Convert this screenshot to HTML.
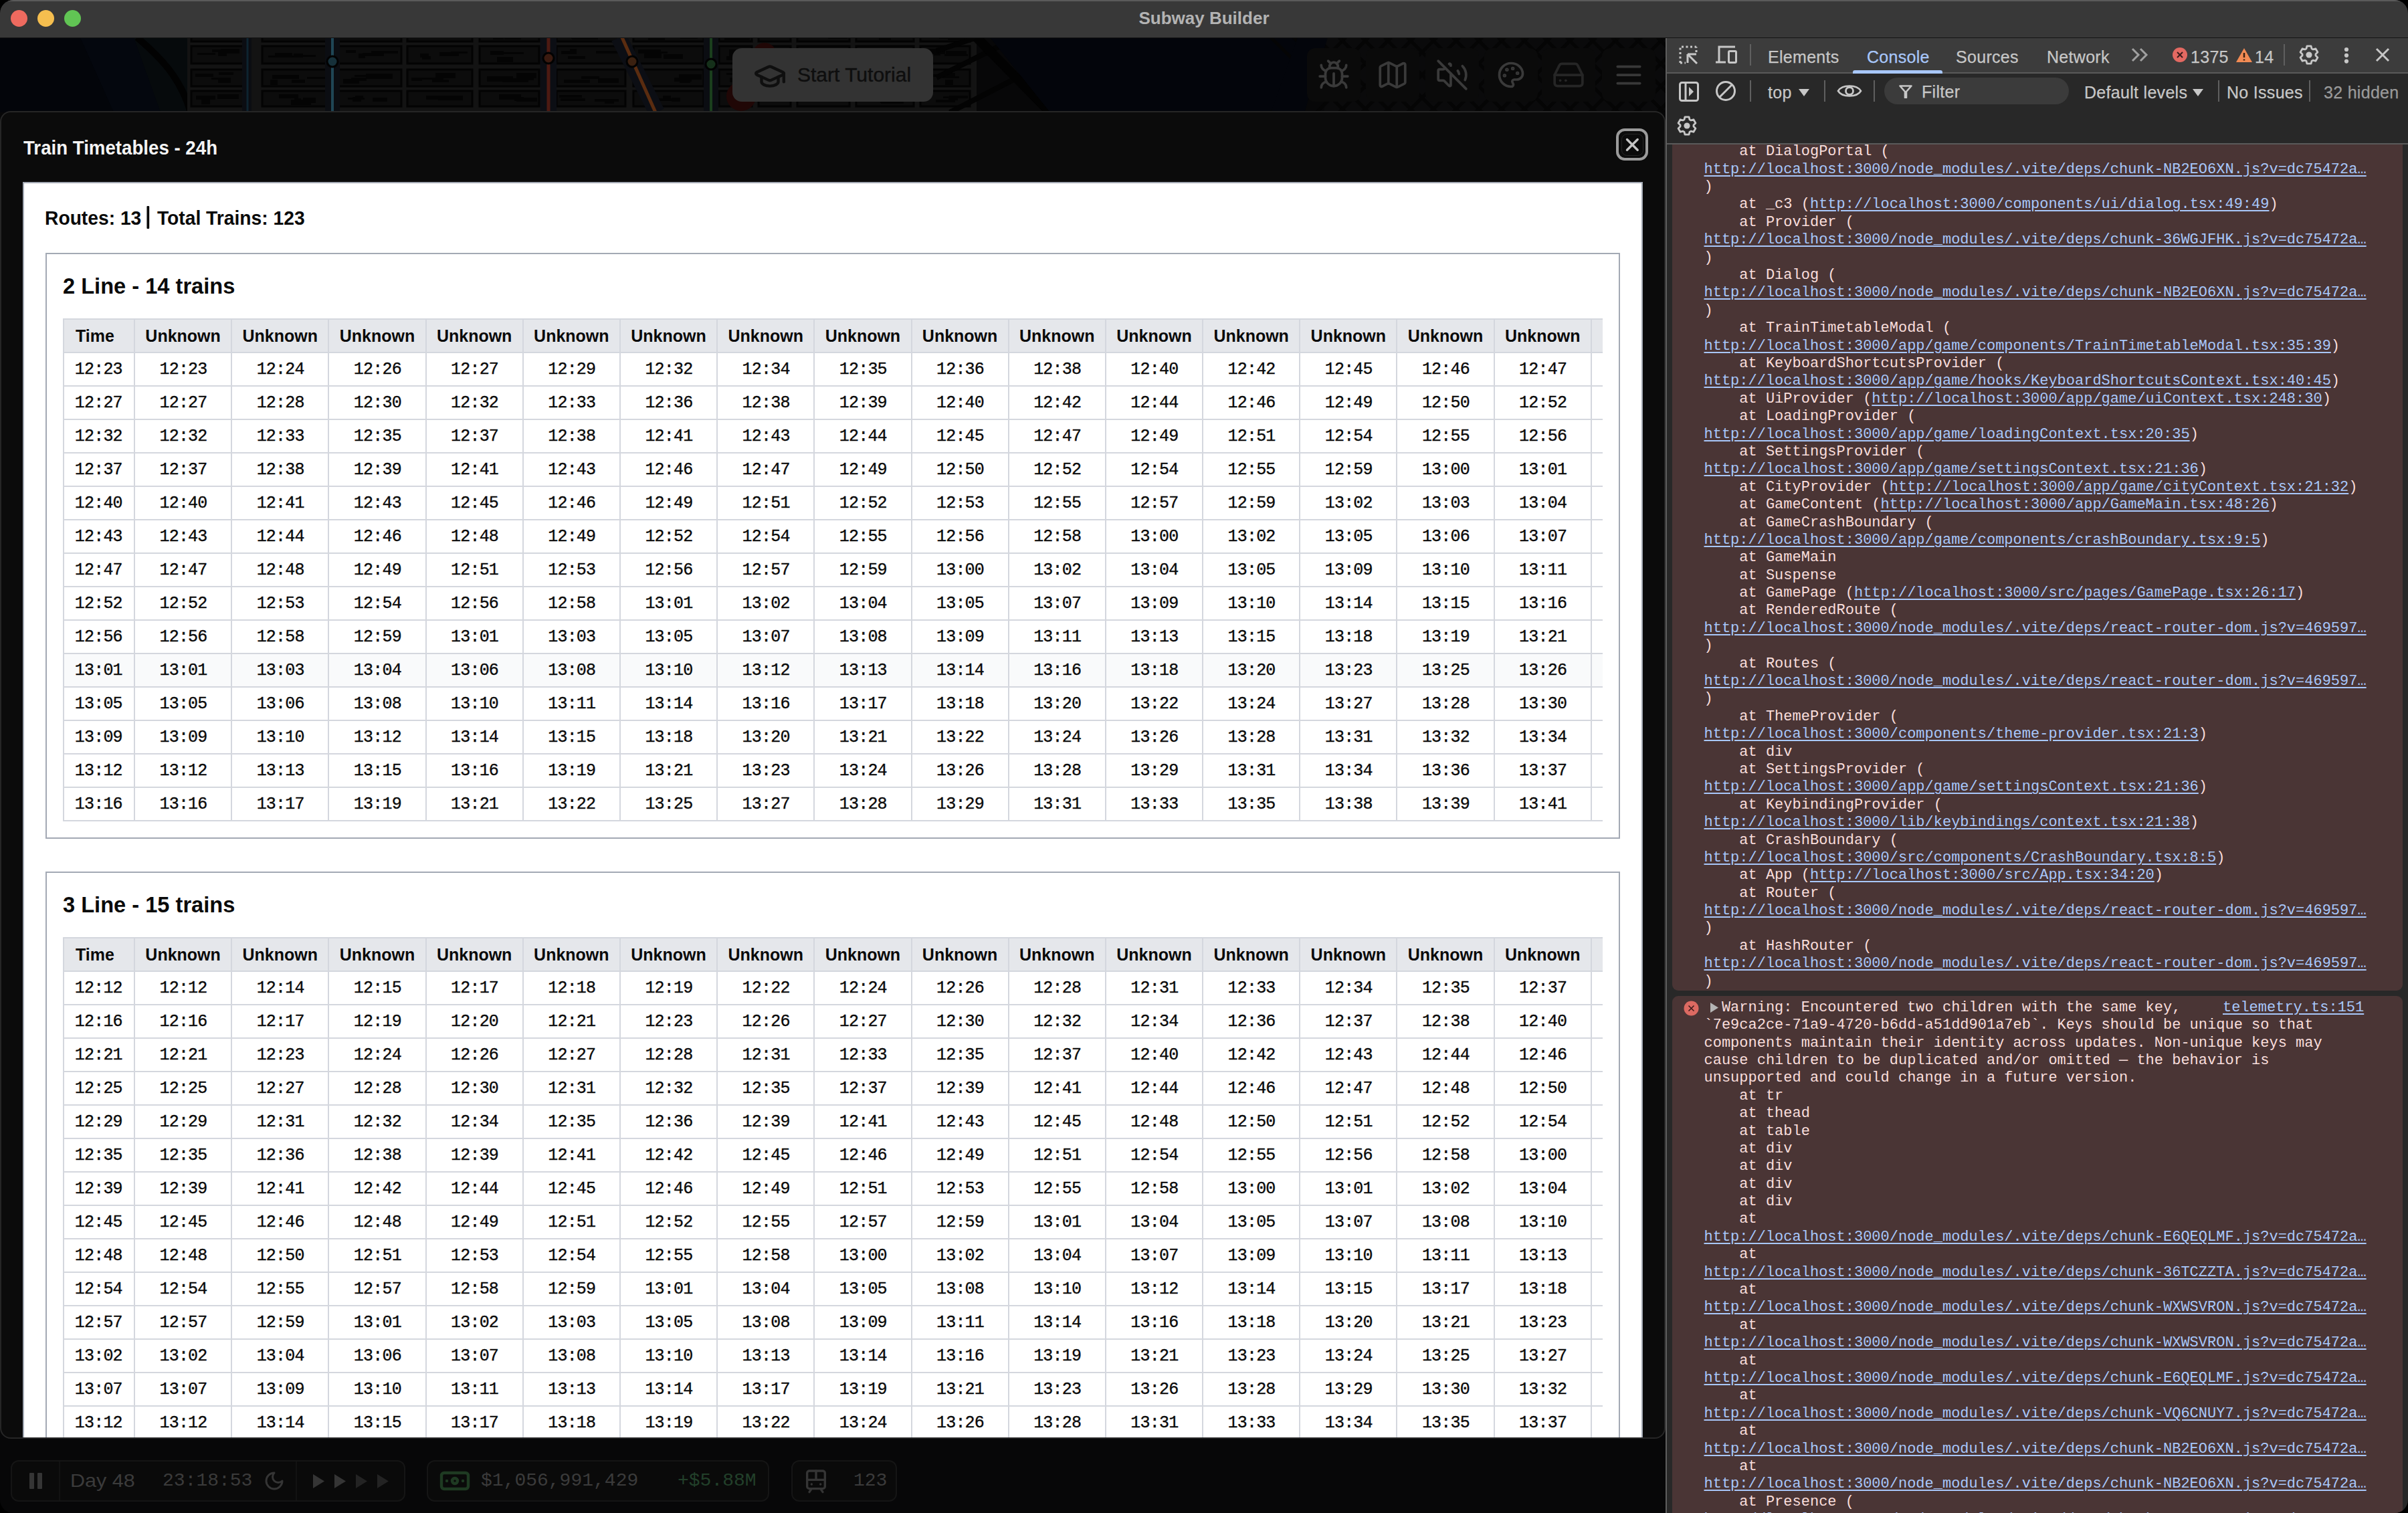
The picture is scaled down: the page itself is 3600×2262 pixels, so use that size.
<!DOCTYPE html><html><head><meta charset="utf-8"><title>Subway Builder</title><style>
*{box-sizing:border-box;margin:0;padding:0}
html,body{width:3600px;height:2262px;overflow:hidden;background:#000}
body{position:relative;font-family:'Liberation Sans', sans-serif}
.abs{position:absolute}
#win{position:absolute;left:0;top:0;width:3600px;height:2262px;border-radius:20px;overflow:hidden;background:#060709}
#tb{position:absolute;left:0;top:0;width:3600px;height:57px;background:#383838;border-top:2px solid #5a5a5a;border-bottom:1px solid #141414;z-index:5}
.tl-dot{position:absolute;top:13px;width:25px;height:25px;border-radius:50%}
#title{position:absolute;left:0;top:0;width:3600px;text-align:center;font:bold 26px/56px 'Liberation Sans', sans-serif;color:#b3b3b3}
#app{position:absolute;left:0;top:56px;width:2490px;height:2206px;overflow:hidden;background:#050608}
#modal{position:absolute;left:0;top:110px;width:2490px;height:1985px;background:#0b0b0b;border:2px solid #262626;border-radius:16px;overflow:hidden}
#mtitle{position:absolute;left:33px;top:38px;font:bold 30px/30px 'Liberation Sans', sans-serif;color:#f4f4f4;white-space:nowrap;transform:scaleX(0.922);transform-origin:0 0}
#close{position:absolute;left:2414px;top:24px;width:48px;height:48px;border:4px solid #9b9b9b;border-radius:13px}
#panel{position:absolute;left:32px;top:104px;width:2422px;height:2000px;background:#fff;border:2px solid #a3a9b4}
#routes{position:absolute;left:31px;top:36.5px;font:bold 30px/30px 'Liberation Sans', sans-serif;color:#0a0a0a;white-space:nowrap;transform:scaleX(0.941);transform-origin:0 0}
.sec{position:absolute;left:32px;width:2354px;height:876px;border:2px solid #a3a9b4;background:#fff}
.sect{position:absolute;left:24px;top:29.5px;font:bold 34px/34px 'Liberation Sans', sans-serif;color:#0a0a0a;white-space:nowrap;transform:scaleX(0.959);transform-origin:0 0}
.twrap{position:absolute;left:24px;top:96px;width:2302px;height:900px;overflow:hidden}
table.tt{border-collapse:collapse;table-layout:fixed;width:2431px}
.tt th,.tt td{border:2px solid #d4d7de;height:50px;text-align:center;padding:0;white-space:nowrap;overflow:hidden}
.tt th{background:#e5e7eb;font:bold 25px/1 'Liberation Sans', sans-serif;color:#0a0a0a}
.tt td{font:25px/1 'Liberation Mono', monospace;color:#0a0a0a;-webkit-text-stroke:0.35px #0a0a0a;letter-spacing:-0.8px;text-indent:0.8px}
.tt .tl{text-align:left;padding-left:17px}
.tt td.tl{padding-left:15px}
.tt tr.hv td{background:#f9fafb}
#dt{position:absolute;left:2490px;top:56px;width:1110px;height:2206px;background:#282828;border-left:2px solid #5e5e5e;overflow:hidden}
#dtb1{position:absolute;left:0;top:0;width:1108px;height:54px;background:#3c3c3c;border-bottom:2px solid #5a5a5a}
#dtb2{position:absolute;left:0;top:54px;width:1108px;height:106px;background:#282828;border-bottom:2px solid #5a5a5a}
.dtx{position:absolute;font:25px/24px 'Liberation Sans', sans-serif;color:#c7c7c7;white-space:nowrap;letter-spacing:0.3px;-webkit-text-stroke:0.25px currentColor}
.sep{position:absolute;width:2px;background:#5f5f5f}
#cons{position:absolute;left:0;top:160px;width:1108px;height:2046px;overflow:hidden}
.msg{position:absolute;left:8px;width:1092px;background:#4a3535}
.ln{font:22px/26.4px 'Liberation Mono', monospace;color:#f9dedc;white-space:pre;height:26.4px}
.lk{color:#a8c7fa;text-decoration:underline;text-underline-offset:3px}
#hud{position:absolute;left:0;top:2094px;width:2490px;height:112px}
.hbox{position:absolute;top:33px;height:62px;border:2px solid #151515;border-radius:12px;background:#0a0a0a}
.htx{position:absolute;font:28px/28px 'Liberation Sans', sans-serif;color:#3b3b3b;white-space:nowrap}
.hmono{position:absolute;font:28px/28px 'Liberation Mono', monospace;color:#3b3b3b;white-space:nowrap}
.ibox{position:absolute;top:16px;width:80px;height:80px;border-radius:12px;background:#0a0a0a}
.ibox svg{position:absolute;left:15px;top:15px}
</style></head><body><div id="win"><div id="tb"><div class="tl-dot" style="left:16px;background:#ee6a5f"></div><div class="tl-dot" style="left:56px;background:#f5be4f"></div><div class="tl-dot" style="left:96px;background:#61c454"></div><div id="title" style="top:-3px">Subway Builder</div></div><div id="app"><svg class="abs" style="left:0;top:0" width="2490" height="2206" viewBox="0 0 2490 2206"><rect width="2490" height="2206" fill="#070708"/><rect x="0" y="0" width="300" height="112" fill="#03050a"/><path d="M120 0 H300 V112 H170Z" fill="#04070e"/><path d="M200 0 H280 L290 112 H240Z" fill="#060a0c"/><path d="M205 0 C240 30 270 60 285 112" stroke="#020202" stroke-width="10" fill="none"/><rect x="280" y="0" width="1180" height="112" fill="#131313"/><rect x="286" y="-10" width="82" height="16" fill="#0c0c0c" stroke="#030303" stroke-width="3"/><rect x="310" y="-6" width="40" height="6" fill="#040404"/><rect x="331" y="-6" width="11" height="7" fill="#040404"/><rect x="296" y="-4" width="21" height="3" fill="#040404"/><rect x="322" y="-6" width="16" height="3" fill="#040404"/><rect x="286" y="13" width="82" height="26" fill="#0c0c0c" stroke="#030303" stroke-width="3"/><rect x="317" y="18" width="23" height="4" fill="#040404"/><rect x="295" y="23" width="27" height="3" fill="#040404"/><rect x="326" y="20" width="13" height="8" fill="#040404"/><rect x="330" y="17" width="28" height="7" fill="#040404"/><rect x="286" y="48" width="82" height="25" fill="#0c0c0c" stroke="#030303" stroke-width="3"/><rect x="327" y="52" width="22" height="4" fill="#040404"/><rect x="292" y="54" width="27" height="5" fill="#040404"/><rect x="316" y="60" width="14" height="3" fill="#040404"/><rect x="326" y="60" width="19" height="8" fill="#040404"/><rect x="286" y="80" width="82" height="23" fill="#0c0c0c" stroke="#030303" stroke-width="3"/><rect x="301" y="93" width="13" height="7" fill="#040404"/><rect x="330" y="89" width="16" height="3" fill="#040404"/><rect x="325" y="85" width="32" height="7" fill="#040404"/><rect x="293" y="87" width="29" height="6" fill="#040404"/><rect x="392" y="-10" width="99" height="16" fill="#0c0c0c" stroke="#030303" stroke-width="3"/><rect x="450" y="-5" width="34" height="6" fill="#040404"/><rect x="454" y="-5" width="21" height="4" fill="#040404"/><rect x="419" y="-6" width="32" height="3" fill="#040404"/><rect x="434" y="-5" width="26" height="5" fill="#040404"/><rect x="392" y="13" width="99" height="26" fill="#0c0c0c" stroke="#030303" stroke-width="3"/><rect x="453" y="26" width="19" height="3" fill="#040404"/><rect x="411" y="23" width="26" height="4" fill="#040404"/><rect x="439" y="24" width="14" height="6" fill="#040404"/><rect x="401" y="27" width="40" height="3" fill="#040404"/><rect x="392" y="48" width="99" height="25" fill="#0c0c0c" stroke="#030303" stroke-width="3"/><rect x="436" y="63" width="20" height="5" fill="#040404"/><rect x="459" y="59" width="28" height="3" fill="#040404"/><rect x="407" y="56" width="40" height="6" fill="#040404"/><rect x="404" y="63" width="11" height="8" fill="#040404"/><rect x="392" y="80" width="99" height="23" fill="#0c0c0c" stroke="#030303" stroke-width="3"/><rect x="435" y="93" width="30" height="8" fill="#040404"/><rect x="453" y="90" width="19" height="8" fill="#040404"/><rect x="440" y="91" width="10" height="5" fill="#040404"/><rect x="417" y="85" width="29" height="6" fill="#040404"/><rect x="503" y="-10" width="97" height="16" fill="#0c0c0c" stroke="#030303" stroke-width="3"/><rect x="514" y="-5" width="16" height="4" fill="#040404"/><rect x="538" y="-5" width="22" height="6" fill="#040404"/><rect x="517" y="-5" width="15" height="6" fill="#040404"/><rect x="542" y="-6" width="38" height="6" fill="#040404"/><rect x="503" y="13" width="97" height="26" fill="#0c0c0c" stroke="#030303" stroke-width="3"/><rect x="542" y="23" width="32" height="5" fill="#040404"/><rect x="555" y="20" width="40" height="4" fill="#040404"/><rect x="517" y="19" width="15" height="4" fill="#040404"/><rect x="536" y="24" width="10" height="7" fill="#040404"/><rect x="503" y="48" width="97" height="25" fill="#0c0c0c" stroke="#030303" stroke-width="3"/><rect x="530" y="56" width="18" height="3" fill="#040404"/><rect x="525" y="60" width="23" height="5" fill="#040404"/><rect x="547" y="54" width="40" height="8" fill="#040404"/><rect x="513" y="62" width="24" height="7" fill="#040404"/><rect x="503" y="80" width="97" height="23" fill="#0c0c0c" stroke="#030303" stroke-width="3"/><rect x="557" y="90" width="22" height="6" fill="#040404"/><rect x="520" y="90" width="25" height="3" fill="#040404"/><rect x="531" y="87" width="12" height="6" fill="#040404"/><rect x="527" y="89" width="13" height="7" fill="#040404"/><rect x="609" y="-10" width="97" height="16" fill="#0c0c0c" stroke="#030303" stroke-width="3"/><rect x="619" y="-6" width="13" height="7" fill="#040404"/><rect x="632" y="-6" width="27" height="5" fill="#040404"/><rect x="616" y="-6" width="12" height="7" fill="#040404"/><rect x="661" y="-4" width="14" height="5" fill="#040404"/><rect x="609" y="13" width="97" height="26" fill="#0c0c0c" stroke="#030303" stroke-width="3"/><rect x="657" y="22" width="29" height="6" fill="#040404"/><rect x="628" y="24" width="13" height="6" fill="#040404"/><rect x="674" y="21" width="25" height="3" fill="#040404"/><rect x="631" y="28" width="13" height="5" fill="#040404"/><rect x="609" y="48" width="97" height="25" fill="#0c0c0c" stroke="#030303" stroke-width="3"/><rect x="646" y="63" width="25" height="4" fill="#040404"/><rect x="615" y="60" width="16" height="5" fill="#040404"/><rect x="631" y="60" width="32" height="3" fill="#040404"/><rect x="651" y="53" width="30" height="8" fill="#040404"/><rect x="609" y="80" width="97" height="23" fill="#0c0c0c" stroke="#030303" stroke-width="3"/><rect x="646" y="89" width="26" height="4" fill="#040404"/><rect x="658" y="87" width="34" height="7" fill="#040404"/><rect x="655" y="87" width="30" height="7" fill="#040404"/><rect x="637" y="87" width="35" height="6" fill="#040404"/><rect x="717" y="-10" width="89" height="16" fill="#0c0c0c" stroke="#030303" stroke-width="3"/><rect x="768" y="-6" width="35" height="4" fill="#040404"/><rect x="754" y="-5" width="25" height="8" fill="#040404"/><rect x="722" y="-5" width="10" height="6" fill="#040404"/><rect x="737" y="-4" width="16" height="7" fill="#040404"/><rect x="717" y="13" width="89" height="26" fill="#0c0c0c" stroke="#030303" stroke-width="3"/><rect x="743" y="29" width="24" height="8" fill="#040404"/><rect x="743" y="22" width="40" height="3" fill="#040404"/><rect x="735" y="20" width="13" height="6" fill="#040404"/><rect x="733" y="20" width="20" height="6" fill="#040404"/><rect x="717" y="48" width="89" height="25" fill="#0c0c0c" stroke="#030303" stroke-width="3"/><rect x="760" y="61" width="38" height="3" fill="#040404"/><rect x="751" y="62" width="39" height="5" fill="#040404"/><rect x="772" y="53" width="30" height="8" fill="#040404"/><rect x="728" y="58" width="39" height="8" fill="#040404"/><rect x="717" y="80" width="89" height="23" fill="#0c0c0c" stroke="#030303" stroke-width="3"/><rect x="769" y="91" width="16" height="4" fill="#040404"/><rect x="748" y="89" width="35" height="3" fill="#040404"/><rect x="772" y="90" width="31" height="6" fill="#040404"/><rect x="746" y="85" width="33" height="8" fill="#040404"/><rect x="832" y="-10" width="103" height="16" fill="#0c0c0c" stroke="#030303" stroke-width="3"/><rect x="856" y="-6" width="15" height="3" fill="#040404"/><rect x="855" y="-5" width="28" height="8" fill="#040404"/><rect x="854" y="-4" width="29" height="6" fill="#040404"/><rect x="880" y="-4" width="14" height="7" fill="#040404"/><rect x="832" y="13" width="103" height="26" fill="#0c0c0c" stroke="#030303" stroke-width="3"/><rect x="852" y="17" width="10" height="8" fill="#040404"/><rect x="849" y="28" width="26" height="4" fill="#040404"/><rect x="891" y="20" width="37" height="4" fill="#040404"/><rect x="839" y="20" width="18" height="5" fill="#040404"/><rect x="832" y="48" width="103" height="25" fill="#0c0c0c" stroke="#030303" stroke-width="3"/><rect x="900" y="61" width="17" height="5" fill="#040404"/><rect x="869" y="58" width="27" height="4" fill="#040404"/><rect x="843" y="63" width="39" height="5" fill="#040404"/><rect x="894" y="61" width="31" height="7" fill="#040404"/><rect x="832" y="80" width="103" height="23" fill="#0c0c0c" stroke="#030303" stroke-width="3"/><rect x="889" y="92" width="36" height="4" fill="#040404"/><rect x="904" y="92" width="14" height="7" fill="#040404"/><rect x="838" y="91" width="37" height="4" fill="#040404"/><rect x="836" y="86" width="34" height="4" fill="#040404"/><rect x="947" y="-10" width="105" height="16" fill="#0c0c0c" stroke="#030303" stroke-width="3"/><rect x="969" y="-4" width="25" height="8" fill="#040404"/><rect x="966" y="-6" width="27" height="5" fill="#040404"/><rect x="1017" y="-4" width="26" height="6" fill="#040404"/><rect x="964" y="-4" width="38" height="3" fill="#040404"/><rect x="947" y="13" width="105" height="26" fill="#0c0c0c" stroke="#030303" stroke-width="3"/><rect x="982" y="21" width="16" height="3" fill="#040404"/><rect x="963" y="24" width="26" height="7" fill="#040404"/><rect x="954" y="18" width="34" height="6" fill="#040404"/><rect x="992" y="25" width="29" height="7" fill="#040404"/><rect x="947" y="48" width="105" height="25" fill="#0c0c0c" stroke="#030303" stroke-width="3"/><rect x="1016" y="63" width="16" height="5" fill="#040404"/><rect x="1008" y="60" width="26" height="6" fill="#040404"/><rect x="1015" y="55" width="34" height="8" fill="#040404"/><rect x="1017" y="56" width="32" height="7" fill="#040404"/><rect x="947" y="80" width="105" height="23" fill="#0c0c0c" stroke="#030303" stroke-width="3"/><rect x="976" y="91" width="36" height="4" fill="#040404"/><rect x="1004" y="90" width="13" height="6" fill="#040404"/><rect x="991" y="87" width="12" height="6" fill="#040404"/><rect x="960" y="88" width="16" height="3" fill="#040404"/><rect x="1075" y="-10" width="49" height="16" fill="#0c0c0c" stroke="#030303" stroke-width="3"/><rect x="1083" y="-4" width="38" height="8" fill="#040404"/><rect x="1090" y="-5" width="14" height="4" fill="#040404"/><rect x="1093" y="-4" width="17" height="3" fill="#040404"/><rect x="1091" y="-5" width="30" height="4" fill="#040404"/><rect x="1075" y="13" width="49" height="26" fill="#0c0c0c" stroke="#030303" stroke-width="3"/><rect x="1086" y="28" width="15" height="6" fill="#040404"/><rect x="1091" y="23" width="20" height="4" fill="#040404"/><rect x="1090" y="18" width="20" height="8" fill="#040404"/><rect x="1090" y="22" width="10" height="7" fill="#040404"/><rect x="1075" y="48" width="49" height="25" fill="#0c0c0c" stroke="#030303" stroke-width="3"/><rect x="1093" y="63" width="24" height="3" fill="#040404"/><rect x="1091" y="60" width="20" height="7" fill="#040404"/><rect x="1088" y="53" width="26" height="3" fill="#040404"/><rect x="1086" y="53" width="35" height="3" fill="#040404"/><rect x="1075" y="80" width="49" height="23" fill="#0c0c0c" stroke="#030303" stroke-width="3"/><rect x="1087" y="84" width="18" height="4" fill="#040404"/><rect x="1087" y="86" width="34" height="6" fill="#040404"/><rect x="1087" y="86" width="22" height="7" fill="#040404"/><rect x="1094" y="89" width="27" height="3" fill="#040404"/><rect x="1134" y="-10" width="48" height="16" fill="#0c0c0c" stroke="#030303" stroke-width="3"/><rect x="1142" y="-4" width="11" height="4" fill="#040404"/><rect x="1144" y="-6" width="35" height="5" fill="#040404"/><rect x="1138" y="-6" width="30" height="5" fill="#040404"/><rect x="1139" y="-6" width="29" height="3" fill="#040404"/><rect x="1134" y="13" width="48" height="26" fill="#0c0c0c" stroke="#030303" stroke-width="3"/><rect x="1142" y="18" width="37" height="6" fill="#040404"/><rect x="1138" y="25" width="20" height="6" fill="#040404"/><rect x="1152" y="21" width="27" height="7" fill="#040404"/><rect x="1140" y="25" width="11" height="8" fill="#040404"/><rect x="1134" y="48" width="48" height="25" fill="#0c0c0c" stroke="#030303" stroke-width="3"/><rect x="1141" y="53" width="38" height="4" fill="#040404"/><rect x="1142" y="54" width="11" height="4" fill="#040404"/><rect x="1152" y="62" width="19" height="5" fill="#040404"/><rect x="1146" y="55" width="33" height="5" fill="#040404"/><rect x="1134" y="80" width="48" height="23" fill="#0c0c0c" stroke="#030303" stroke-width="3"/><rect x="1145" y="86" width="26" height="5" fill="#040404"/><rect x="1143" y="84" width="35" height="5" fill="#040404"/><rect x="1138" y="84" width="10" height="8" fill="#040404"/><rect x="1146" y="87" width="27" height="7" fill="#040404"/><rect x="1192" y="-10" width="78" height="16" fill="#0c0c0c" stroke="#030303" stroke-width="3"/><rect x="1226" y="-5" width="17" height="3" fill="#040404"/><rect x="1238" y="-4" width="29" height="6" fill="#040404"/><rect x="1238" y="-4" width="25" height="6" fill="#040404"/><rect x="1228" y="-4" width="19" height="4" fill="#040404"/><rect x="1192" y="13" width="78" height="26" fill="#0c0c0c" stroke="#030303" stroke-width="3"/><rect x="1210" y="20" width="20" height="8" fill="#040404"/><rect x="1236" y="23" width="14" height="5" fill="#040404"/><rect x="1199" y="19" width="36" height="3" fill="#040404"/><rect x="1200" y="28" width="30" height="5" fill="#040404"/><rect x="1192" y="48" width="78" height="25" fill="#0c0c0c" stroke="#030303" stroke-width="3"/><rect x="1223" y="52" width="15" height="3" fill="#040404"/><rect x="1238" y="58" width="29" height="7" fill="#040404"/><rect x="1238" y="61" width="19" height="4" fill="#040404"/><rect x="1240" y="52" width="19" height="6" fill="#040404"/><rect x="1192" y="80" width="78" height="23" fill="#0c0c0c" stroke="#030303" stroke-width="3"/><rect x="1207" y="88" width="15" height="6" fill="#040404"/><rect x="1196" y="89" width="18" height="5" fill="#040404"/><rect x="1231" y="87" width="20" height="3" fill="#040404"/><rect x="1215" y="89" width="16" height="4" fill="#040404"/><rect x="1280" y="-10" width="86" height="16" fill="#0c0c0c" stroke="#030303" stroke-width="3"/><rect x="1284" y="-5" width="20" height="3" fill="#040404"/><rect x="1314" y="-4" width="18" height="8" fill="#040404"/><rect x="1296" y="-4" width="17" height="3" fill="#040404"/><rect x="1289" y="-6" width="18" height="4" fill="#040404"/><rect x="1280" y="13" width="86" height="26" fill="#0c0c0c" stroke="#030303" stroke-width="3"/><rect x="1309" y="17" width="28" height="6" fill="#040404"/><rect x="1285" y="21" width="19" height="8" fill="#040404"/><rect x="1298" y="26" width="12" height="7" fill="#040404"/><rect x="1332" y="27" width="14" height="8" fill="#040404"/><rect x="1280" y="48" width="86" height="25" fill="#0c0c0c" stroke="#030303" stroke-width="3"/><rect x="1334" y="61" width="29" height="6" fill="#040404"/><rect x="1332" y="63" width="20" height="6" fill="#040404"/><rect x="1293" y="63" width="19" height="7" fill="#040404"/><rect x="1325" y="52" width="14" height="8" fill="#040404"/><rect x="1280" y="80" width="86" height="23" fill="#0c0c0c" stroke="#030303" stroke-width="3"/><rect x="1316" y="90" width="30" height="8" fill="#040404"/><rect x="1328" y="92" width="35" height="4" fill="#040404"/><rect x="1317" y="92" width="34" height="7" fill="#040404"/><rect x="1336" y="84" width="27" height="8" fill="#040404"/><rect x="1376" y="-10" width="74" height="16" fill="#0c0c0c" stroke="#030303" stroke-width="3"/><rect x="1417" y="-4" width="30" height="8" fill="#040404"/><rect x="1394" y="-6" width="12" height="3" fill="#040404"/><rect x="1388" y="-5" width="30" height="3" fill="#040404"/><rect x="1404" y="-5" width="36" height="7" fill="#040404"/><rect x="1376" y="13" width="74" height="26" fill="#0c0c0c" stroke="#030303" stroke-width="3"/><rect x="1383" y="17" width="30" height="8" fill="#040404"/><rect x="1414" y="20" width="31" height="6" fill="#040404"/><rect x="1396" y="24" width="10" height="3" fill="#040404"/><rect x="1412" y="25" width="35" height="3" fill="#040404"/><rect x="1376" y="48" width="74" height="25" fill="#0c0c0c" stroke="#030303" stroke-width="3"/><rect x="1413" y="63" width="12" height="8" fill="#040404"/><rect x="1410" y="53" width="18" height="5" fill="#040404"/><rect x="1395" y="55" width="33" height="4" fill="#040404"/><rect x="1409" y="58" width="25" height="3" fill="#040404"/><rect x="1376" y="80" width="74" height="23" fill="#0c0c0c" stroke="#030303" stroke-width="3"/><rect x="1410" y="88" width="37" height="3" fill="#040404"/><rect x="1419" y="87" width="28" height="3" fill="#040404"/><rect x="1418" y="89" width="14" height="5" fill="#040404"/><rect x="1399" y="93" width="29" height="4" fill="#040404"/><path d="M1400 20 L1460 0 M1400 60 L1520 0 M1420 112 L1560 40" stroke="#030303" stroke-width="8" fill="none"/><path d="M1460 0 L1570 112" stroke="#020202" stroke-width="14" fill="none"/><path d="M1480 0 H1980 L1950 112 H1570Z" fill="#03050b"/><rect x="1980" y="0" width="510" height="112" fill="#0a0a0b"/><path d="M1900 0 L2012 112" stroke="#050505" stroke-width="5"/><path d="M1900 112 L2012 0" stroke="#050505" stroke-width="5"/><path d="M1934 0 L2046 112" stroke="#050505" stroke-width="5"/><path d="M1934 112 L2046 0" stroke="#050505" stroke-width="5"/><path d="M1968 0 L2080 112" stroke="#050505" stroke-width="5"/><path d="M1968 112 L2080 0" stroke="#050505" stroke-width="5"/><path d="M2002 0 L2114 112" stroke="#050505" stroke-width="5"/><path d="M2002 112 L2114 0" stroke="#050505" stroke-width="5"/><path d="M2036 0 L2148 112" stroke="#050505" stroke-width="5"/><path d="M2036 112 L2148 0" stroke="#050505" stroke-width="5"/><path d="M2070 0 L2182 112" stroke="#050505" stroke-width="5"/><path d="M2070 112 L2182 0" stroke="#050505" stroke-width="5"/><path d="M2104 0 L2216 112" stroke="#050505" stroke-width="5"/><path d="M2104 112 L2216 0" stroke="#050505" stroke-width="5"/><path d="M2138 0 L2250 112" stroke="#050505" stroke-width="5"/><path d="M2138 112 L2250 0" stroke="#050505" stroke-width="5"/><path d="M2172 0 L2284 112" stroke="#050505" stroke-width="5"/><path d="M2172 112 L2284 0" stroke="#050505" stroke-width="5"/><path d="M2206 0 L2318 112" stroke="#050505" stroke-width="5"/><path d="M2206 112 L2318 0" stroke="#050505" stroke-width="5"/><path d="M2240 0 L2352 112" stroke="#050505" stroke-width="5"/><path d="M2240 112 L2352 0" stroke="#050505" stroke-width="5"/><path d="M2274 0 L2386 112" stroke="#050505" stroke-width="5"/><path d="M2274 112 L2386 0" stroke="#050505" stroke-width="5"/><path d="M2308 0 L2420 112" stroke="#050505" stroke-width="5"/><path d="M2308 112 L2420 0" stroke="#050505" stroke-width="5"/><path d="M2342 0 L2454 112" stroke="#050505" stroke-width="5"/><path d="M2342 112 L2454 0" stroke="#050505" stroke-width="5"/><path d="M2376 0 L2488 112" stroke="#050505" stroke-width="5"/><path d="M2376 112 L2488 0" stroke="#050505" stroke-width="5"/><path d="M2410 0 L2522 112" stroke="#050505" stroke-width="5"/><path d="M2410 112 L2522 0" stroke="#050505" stroke-width="5"/><path d="M2444 0 L2556 112" stroke="#050505" stroke-width="5"/><path d="M2444 112 L2556 0" stroke="#050505" stroke-width="5"/><path d="M2478 0 L2590 112" stroke="#050505" stroke-width="5"/><path d="M2478 112 L2590 0" stroke="#050505" stroke-width="5"/><path d="M2512 0 L2624 112" stroke="#050505" stroke-width="5"/><path d="M2512 112 L2624 0" stroke="#050505" stroke-width="5"/><path d="M2546 0 L2658 112" stroke="#050505" stroke-width="5"/><path d="M2546 112 L2658 0" stroke="#050505" stroke-width="5"/><path d="M1950 112 L1985 0 H1940 L1900 112Z" fill="#03050b"/><rect x="362" y="0" width="14" height="112" fill="#0b0d12"/><path d="M370 0 V112" stroke="#0e2430" stroke-width="3"/><rect x="486" y="0" width="22" height="112" fill="#0b0d12"/><path d="M497 0 V112" stroke="#1f4656" stroke-width="4"/><rect x="808" y="0" width="24" height="112" fill="#0c0e14"/><path d="M820 0 V112" stroke="#4c1a12" stroke-width="5"/><path d="M925 0 L982 112" stroke="#0c0e14" stroke-width="24"/><path d="M930 0 L980 112" stroke="#5a2c10" stroke-width="5"/><rect x="1052" y="0" width="22" height="112" fill="#0b0d12"/><path d="M1063 0 V112" stroke="#1a3f1d" stroke-width="4"/><circle cx="497" cy="36" r="8" fill="#16303a" stroke="#020202" stroke-width="3"/><circle cx="820" cy="31" r="8" fill="#3a1a10" stroke="#020202" stroke-width="3"/><circle cx="945" cy="36" r="8" fill="#3a2010" stroke="#020202" stroke-width="3"/><circle cx="1063" cy="40" r="8" fill="#15301a" stroke="#020202" stroke-width="3"/><circle cx="1108" cy="88" r="22" fill="#200706"/><circle cx="1143" cy="26" r="18" fill="#200706"/></svg><div class="abs" style="left:1095px;top:16px;width:300px;height:80px;border-radius:14px;background:#333"></div><div class="abs" style="left:1126px;top:33px"><svg width="50" height="50" viewBox="0 0 24 24" fill="none" stroke="#0f0f0f" stroke-width="2.1" stroke-linecap="round" stroke-linejoin="round" ><path d="M21.42 10.922a1 1 0 0 0-.019-1.838L12.83 5.18a2 2 0 0 0-1.66 0L2.6 9.08a1 1 0 0 0 0 1.832l8.57 3.908a2 2 0 0 0 1.66 0z"/><path d="M22 10v6"/><path d="M6 12.5V16a6 3 0 0 0 12 0v-3.5"/></svg></div><div class="abs" style="left:1192px;top:41px;font:30px/30px 'Liberation Sans', sans-serif;color:#0e0e0e;white-space:nowrap;-webkit-text-stroke:0.4px #0e0e0e">Start Tutorial</div><div class="ibox" style="left:1954px"><svg width="50" height="50" viewBox="0 0 24 24" fill="none" stroke="#3a3a3a" stroke-width="1.80" stroke-linecap="round" stroke-linejoin="round" style="left:15.0px;top:15.0px"><path d="m8 2 1.88 1.88"/><path d="M14.12 3.88 16 2"/><path d="M9 7.13v-1a3.003 3.003 0 1 1 6 0v1"/><path d="M12 20c-3.3 0-6-2.7-6-6v-3a4 4 0 0 1 4-4h4a4 4 0 0 1 4 4v3c0 3.3-2.7 6-6 6"/><path d="M12 20v-9"/><path d="M6.53 9C4.6 8.8 3 7.1 3 5"/><path d="M6 13H2"/><path d="M3 21c0-2.1 1.7-3.9 3.8-4"/><path d="M20.97 5c0 2.1-1.6 3.8-3.5 4"/><path d="M22 13h-4"/><path d="M17.2 17c2.1.1 3.8 1.9 3.8 4"/></svg></div><div class="ibox" style="left:2042px"><svg width="50" height="50" viewBox="0 0 24 24" fill="none" stroke="#3a3a3a" stroke-width="1.80" stroke-linecap="round" stroke-linejoin="round" style="left:15.0px;top:15.0px"><path d="M14.106 5.553a2 2 0 0 0 1.788 0l3.659-1.83A1 1 0 0 1 21 4.619v12.764a1 1 0 0 1-.553.894l-4.553 2.277a2 2 0 0 1-1.788 0l-4.212-2.106a2 2 0 0 0-1.788 0l-3.659 1.83A1 1 0 0 1 3 19.381V6.618a1 1 0 0 1 .553-.894l4.553-2.277a2 2 0 0 1 1.788 0z"/><path d="M15 5.764v15"/><path d="M9 3.236v15"/></svg></div><div class="ibox" style="left:2131px"><svg width="50" height="50" viewBox="0 0 24 24" fill="none" stroke="#3a3a3a" stroke-width="1.80" stroke-linecap="round" stroke-linejoin="round" style="left:15.0px;top:15.0px"><path d="M16 9a5 5 0 0 1 .95 2.293"/><path d="M19.364 5.636a9 9 0 0 1 1.889 9.96"/><path d="m2 2 20 20"/><path d="m7 7-.587.587A1.4 1.4 0 0 1 5.416 8H3a1 1 0 0 0-1 1v6a1 1 0 0 0 1 1h2.416a1.4 1.4 0 0 1 .997.413l3.383 3.384A.705.705 0 0 0 11 19.298V11"/><path d="M9.828 4.172A.686.686 0 0 1 11 4.657v.686"/></svg></div><div class="ibox" style="left:2219px"><svg width="42" height="42" viewBox="0 0 24 24" fill="none" stroke="#3a3a3a" stroke-width="2.14" stroke-linecap="round" stroke-linejoin="round" style="left:19.0px;top:19.0px"><path d="M12 22a1 1 0 0 1 0-20 10 9 0 0 1 10 9 5 5 0 0 1-5 5h-2.25a1.75 1.75 0 0 0-1.4 2.8l.3.4a1.75 1.75 0 0 1-1.4 2.8z"/><circle cx="13.5" cy="6.5" r=".5" fill="#3a3a3a"/><circle cx="17.5" cy="10.5" r=".5" fill="#3a3a3a"/><circle cx="6.5" cy="12.5" r=".5" fill="#3a3a3a"/><circle cx="8.5" cy="7.5" r=".5" fill="#3a3a3a"/></svg></div><div class="ibox" style="left:2305px"><svg width="50" height="50" viewBox="0 0 24 24" fill="none" stroke="#262626" stroke-width="1.80" stroke-linecap="round" stroke-linejoin="round" style="left:15.0px;top:15.0px"><line x1="22" x2="2" y1="12" y2="12"/><path d="M5.45 5.11 2 12v6a2 2 0 0 0 2 2h16a2 2 0 0 0 2-2v-6l-3.45-6.89A2 2 0 0 0 16.76 4H7.24a2 2 0 0 0-1.79 1.11z"/><line x1="6" x2="6.01" y1="16" y2="16"/><line x1="10" x2="10.01" y1="16" y2="16"/></svg></div><div class="ibox" style="left:2395px"><svg width="50" height="50" viewBox="0 0 24 24" fill="none" stroke="#383838" stroke-width="1.80" stroke-linecap="round" stroke-linejoin="round" style="left:15.0px;top:15.0px"><line x1="4" x2="20" y1="6" y2="6"/><line x1="4" x2="20" y1="12" y2="12"/><line x1="4" x2="20" y1="18" y2="18"/></svg></div><div id="modal"><div id="mtitle">Train Timetables - 24h</div><div id="close"><svg width="42" height="42" viewBox="0 0 42 42" style="position:absolute;left:0;top:0"><rect x="4.5" y="4.5" width="32" height="32" rx="8" fill="none" stroke="#262626" stroke-width="1"/><path d="M12.5 12.5 L28.2 28.2 M28.2 12.5 L12.5 28.2" stroke="#c4c4c4" stroke-width="3.4" stroke-linecap="round"/></svg></div><div id="panel"><div id="routes">Routes: 13<span style="display:inline-block;width:4.4px;height:33.5px;background:#0a0a0a;vertical-align:baseline;margin:-4px 12.35px -6px 8.35px;border-radius:1px"></span>Total Trains: 123</div><div class="sec" style="top:104px"><div class="sect">2 Line - 14 trains</div><div class="twrap"><table class="tt"><colgroup><col style="width:106px"><col style="width:145.2px"><col style="width:145.2px"><col style="width:145.2px"><col style="width:145.2px"><col style="width:145.2px"><col style="width:145.2px"><col style="width:145.2px"><col style="width:145.2px"><col style="width:145.2px"><col style="width:145.2px"><col style="width:145.2px"><col style="width:145.2px"><col style="width:145.2px"><col style="width:145.2px"><col style="width:145.2px"><col style="width:145.2px"></colgroup><thead><tr><th class="tl">Time</th><th>Unknown</th><th>Unknown</th><th>Unknown</th><th>Unknown</th><th>Unknown</th><th>Unknown</th><th>Unknown</th><th>Unknown</th><th>Unknown</th><th>Unknown</th><th>Unknown</th><th>Unknown</th><th>Unknown</th><th>Unknown</th><th>Unknown</th><th></th></tr></thead><tbody><tr><td class="tl">12:23</td><td>12:23</td><td>12:24</td><td>12:26</td><td>12:27</td><td>12:29</td><td>12:32</td><td>12:34</td><td>12:35</td><td>12:36</td><td>12:38</td><td>12:40</td><td>12:42</td><td>12:45</td><td>12:46</td><td>12:47</td><td></td></tr><tr><td class="tl">12:27</td><td>12:27</td><td>12:28</td><td>12:30</td><td>12:32</td><td>12:33</td><td>12:36</td><td>12:38</td><td>12:39</td><td>12:40</td><td>12:42</td><td>12:44</td><td>12:46</td><td>12:49</td><td>12:50</td><td>12:52</td><td></td></tr><tr><td class="tl">12:32</td><td>12:32</td><td>12:33</td><td>12:35</td><td>12:37</td><td>12:38</td><td>12:41</td><td>12:43</td><td>12:44</td><td>12:45</td><td>12:47</td><td>12:49</td><td>12:51</td><td>12:54</td><td>12:55</td><td>12:56</td><td></td></tr><tr><td class="tl">12:37</td><td>12:37</td><td>12:38</td><td>12:39</td><td>12:41</td><td>12:43</td><td>12:46</td><td>12:47</td><td>12:49</td><td>12:50</td><td>12:52</td><td>12:54</td><td>12:55</td><td>12:59</td><td>13:00</td><td>13:01</td><td></td></tr><tr><td class="tl">12:40</td><td>12:40</td><td>12:41</td><td>12:43</td><td>12:45</td><td>12:46</td><td>12:49</td><td>12:51</td><td>12:52</td><td>12:53</td><td>12:55</td><td>12:57</td><td>12:59</td><td>13:02</td><td>13:03</td><td>13:04</td><td></td></tr><tr><td class="tl">12:43</td><td>12:43</td><td>12:44</td><td>12:46</td><td>12:48</td><td>12:49</td><td>12:52</td><td>12:54</td><td>12:55</td><td>12:56</td><td>12:58</td><td>13:00</td><td>13:02</td><td>13:05</td><td>13:06</td><td>13:07</td><td></td></tr><tr><td class="tl">12:47</td><td>12:47</td><td>12:48</td><td>12:49</td><td>12:51</td><td>12:53</td><td>12:56</td><td>12:57</td><td>12:59</td><td>13:00</td><td>13:02</td><td>13:04</td><td>13:05</td><td>13:09</td><td>13:10</td><td>13:11</td><td></td></tr><tr><td class="tl">12:52</td><td>12:52</td><td>12:53</td><td>12:54</td><td>12:56</td><td>12:58</td><td>13:01</td><td>13:02</td><td>13:04</td><td>13:05</td><td>13:07</td><td>13:09</td><td>13:10</td><td>13:14</td><td>13:15</td><td>13:16</td><td></td></tr><tr><td class="tl">12:56</td><td>12:56</td><td>12:58</td><td>12:59</td><td>13:01</td><td>13:03</td><td>13:05</td><td>13:07</td><td>13:08</td><td>13:09</td><td>13:11</td><td>13:13</td><td>13:15</td><td>13:18</td><td>13:19</td><td>13:21</td><td></td></tr><tr class="hv"><td class="tl">13:01</td><td>13:01</td><td>13:03</td><td>13:04</td><td>13:06</td><td>13:08</td><td>13:10</td><td>13:12</td><td>13:13</td><td>13:14</td><td>13:16</td><td>13:18</td><td>13:20</td><td>13:23</td><td>13:25</td><td>13:26</td><td></td></tr><tr><td class="tl">13:05</td><td>13:05</td><td>13:06</td><td>13:08</td><td>13:10</td><td>13:11</td><td>13:14</td><td>13:16</td><td>13:17</td><td>13:18</td><td>13:20</td><td>13:22</td><td>13:24</td><td>13:27</td><td>13:28</td><td>13:30</td><td></td></tr><tr><td class="tl">13:09</td><td>13:09</td><td>13:10</td><td>13:12</td><td>13:14</td><td>13:15</td><td>13:18</td><td>13:20</td><td>13:21</td><td>13:22</td><td>13:24</td><td>13:26</td><td>13:28</td><td>13:31</td><td>13:32</td><td>13:34</td><td></td></tr><tr><td class="tl">13:12</td><td>13:12</td><td>13:13</td><td>13:15</td><td>13:16</td><td>13:19</td><td>13:21</td><td>13:23</td><td>13:24</td><td>13:26</td><td>13:28</td><td>13:29</td><td>13:31</td><td>13:34</td><td>13:36</td><td>13:37</td><td></td></tr><tr><td class="tl">13:16</td><td>13:16</td><td>13:17</td><td>13:19</td><td>13:21</td><td>13:22</td><td>13:25</td><td>13:27</td><td>13:28</td><td>13:29</td><td>13:31</td><td>13:33</td><td>13:35</td><td>13:38</td><td>13:39</td><td>13:41</td><td></td></tr></tbody></table></div></div><div class="sec" style="top:1029px;height:1000px"><div class="sect">3 Line - 15 trains</div><div class="twrap"><table class="tt"><colgroup><col style="width:106px"><col style="width:145.2px"><col style="width:145.2px"><col style="width:145.2px"><col style="width:145.2px"><col style="width:145.2px"><col style="width:145.2px"><col style="width:145.2px"><col style="width:145.2px"><col style="width:145.2px"><col style="width:145.2px"><col style="width:145.2px"><col style="width:145.2px"><col style="width:145.2px"><col style="width:145.2px"><col style="width:145.2px"><col style="width:145.2px"></colgroup><thead><tr><th class="tl">Time</th><th>Unknown</th><th>Unknown</th><th>Unknown</th><th>Unknown</th><th>Unknown</th><th>Unknown</th><th>Unknown</th><th>Unknown</th><th>Unknown</th><th>Unknown</th><th>Unknown</th><th>Unknown</th><th>Unknown</th><th>Unknown</th><th>Unknown</th><th></th></tr></thead><tbody><tr><td class="tl">12:12</td><td>12:12</td><td>12:14</td><td>12:15</td><td>12:17</td><td>12:18</td><td>12:19</td><td>12:22</td><td>12:24</td><td>12:26</td><td>12:28</td><td>12:31</td><td>12:33</td><td>12:34</td><td>12:35</td><td>12:37</td><td></td></tr><tr><td class="tl">12:16</td><td>12:16</td><td>12:17</td><td>12:19</td><td>12:20</td><td>12:21</td><td>12:23</td><td>12:26</td><td>12:27</td><td>12:30</td><td>12:32</td><td>12:34</td><td>12:36</td><td>12:37</td><td>12:38</td><td>12:40</td><td></td></tr><tr><td class="tl">12:21</td><td>12:21</td><td>12:23</td><td>12:24</td><td>12:26</td><td>12:27</td><td>12:28</td><td>12:31</td><td>12:33</td><td>12:35</td><td>12:37</td><td>12:40</td><td>12:42</td><td>12:43</td><td>12:44</td><td>12:46</td><td></td></tr><tr><td class="tl">12:25</td><td>12:25</td><td>12:27</td><td>12:28</td><td>12:30</td><td>12:31</td><td>12:32</td><td>12:35</td><td>12:37</td><td>12:39</td><td>12:41</td><td>12:44</td><td>12:46</td><td>12:47</td><td>12:48</td><td>12:50</td><td></td></tr><tr><td class="tl">12:29</td><td>12:29</td><td>12:31</td><td>12:32</td><td>12:34</td><td>12:35</td><td>12:36</td><td>12:39</td><td>12:41</td><td>12:43</td><td>12:45</td><td>12:48</td><td>12:50</td><td>12:51</td><td>12:52</td><td>12:54</td><td></td></tr><tr><td class="tl">12:35</td><td>12:35</td><td>12:36</td><td>12:38</td><td>12:39</td><td>12:41</td><td>12:42</td><td>12:45</td><td>12:46</td><td>12:49</td><td>12:51</td><td>12:54</td><td>12:55</td><td>12:56</td><td>12:58</td><td>13:00</td><td></td></tr><tr><td class="tl">12:39</td><td>12:39</td><td>12:41</td><td>12:42</td><td>12:44</td><td>12:45</td><td>12:46</td><td>12:49</td><td>12:51</td><td>12:53</td><td>12:55</td><td>12:58</td><td>13:00</td><td>13:01</td><td>13:02</td><td>13:04</td><td></td></tr><tr><td class="tl">12:45</td><td>12:45</td><td>12:46</td><td>12:48</td><td>12:49</td><td>12:51</td><td>12:52</td><td>12:55</td><td>12:57</td><td>12:59</td><td>13:01</td><td>13:04</td><td>13:05</td><td>13:07</td><td>13:08</td><td>13:10</td><td></td></tr><tr><td class="tl">12:48</td><td>12:48</td><td>12:50</td><td>12:51</td><td>12:53</td><td>12:54</td><td>12:55</td><td>12:58</td><td>13:00</td><td>13:02</td><td>13:04</td><td>13:07</td><td>13:09</td><td>13:10</td><td>13:11</td><td>13:13</td><td></td></tr><tr><td class="tl">12:54</td><td>12:54</td><td>12:55</td><td>12:57</td><td>12:58</td><td>12:59</td><td>13:01</td><td>13:04</td><td>13:05</td><td>13:08</td><td>13:10</td><td>13:12</td><td>13:14</td><td>13:15</td><td>13:17</td><td>13:18</td><td></td></tr><tr><td class="tl">12:57</td><td>12:57</td><td>12:59</td><td>13:01</td><td>13:02</td><td>13:03</td><td>13:05</td><td>13:08</td><td>13:09</td><td>13:11</td><td>13:14</td><td>13:16</td><td>13:18</td><td>13:20</td><td>13:21</td><td>13:23</td><td></td></tr><tr><td class="tl">13:02</td><td>13:02</td><td>13:04</td><td>13:06</td><td>13:07</td><td>13:08</td><td>13:10</td><td>13:13</td><td>13:14</td><td>13:16</td><td>13:19</td><td>13:21</td><td>13:23</td><td>13:24</td><td>13:25</td><td>13:27</td><td></td></tr><tr><td class="tl">13:07</td><td>13:07</td><td>13:09</td><td>13:10</td><td>13:11</td><td>13:13</td><td>13:14</td><td>13:17</td><td>13:19</td><td>13:21</td><td>13:23</td><td>13:26</td><td>13:28</td><td>13:29</td><td>13:30</td><td>13:32</td><td></td></tr><tr><td class="tl">13:12</td><td>13:12</td><td>13:14</td><td>13:15</td><td>13:17</td><td>13:18</td><td>13:19</td><td>13:22</td><td>13:24</td><td>13:26</td><td>13:28</td><td>13:31</td><td>13:33</td><td>13:34</td><td>13:35</td><td>13:37</td><td></td></tr></tbody></table></div></div></div></div><div id="hud"><div class="hbox" style="left:16px;width:590px"></div><div class="abs" style="left:88px;top:35px;width:2px;height:58px;background:#121212"></div><div class="abs" style="left:442px;top:35px;width:2px;height:58px;background:#121212"></div><div class="abs" style="left:44px;top:52px;width:7px;height:24px;background:#353535;border-radius:1px"></div><div class="abs" style="left:56px;top:52px;width:7px;height:24px;background:#353535;border-radius:1px"></div><div class="htx" style="left:105px;top:50px;transform:scaleX(1.09);transform-origin:0 0">Day 48</div><div class="hmono" style="left:243px;top:50px">23:18:53</div><div class="abs" style="left:394px;top:48px"><svg width="32" height="32" viewBox="0 0 24 24" fill="none" stroke="#353535" stroke-width="2.2" stroke-linecap="round" stroke-linejoin="round" ><path d="M12 3a6 6 0 0 0 9 9 9 9 0 1 1-9-9Z"/></svg></div><svg class="abs" style="left:468px;top:54px" width="17" height="21" viewBox="0 0 17 21"><path d="M0 0 L17 10.5 L0 21Z" fill="#353535"/></svg><svg class="abs" style="left:500px;top:54px" width="17" height="21" viewBox="0 0 17 21"><path d="M0 0 L17 10.5 L0 21Z" fill="#353535"/></svg><svg class="abs" style="left:532px;top:54px" width="17" height="21" viewBox="0 0 17 21"><path d="M0 0 L17 10.5 L0 21Z" fill="#232323"/></svg><svg class="abs" style="left:564px;top:54px" width="17" height="21" viewBox="0 0 17 21"><path d="M0 0 L17 10.5 L0 21Z" fill="#232323"/></svg><div class="hbox" style="left:638px;width:512px"></div><div class="abs" style="left:656px;top:40px"><svg width="48" height="48" viewBox="0 0 24 24" fill="none" stroke="#1e3a22" stroke-width="2.2" stroke-linecap="round" stroke-linejoin="round" ><rect width="20" height="12" x="2" y="6" rx="2"/><circle cx="12" cy="12" r="2"/><path d="M6 12h.01M18 12h.01"/></svg></div><div class="hmono" style="left:719px;top:50px">$1,056,991,429</div><div class="hmono" style="left:1013px;top:50px;color:#22402a">+$5.88M</div><div class="hbox" style="left:1183px;width:158px"></div><div class="abs" style="left:1200px;top:44px"><svg width="40" height="40" viewBox="0 0 24 24" fill="none" stroke="#353535" stroke-width="2" stroke-linecap="round" stroke-linejoin="round" ><rect width="16" height="16" x="4" y="3" rx="2"/><path d="M4 11h16"/><path d="M12 3v8"/><path d="m8 19-2 3"/><path d="m18 22-2-3"/><path d="M8 15h.01"/><path d="M16 15h.01"/></svg></div><div class="hmono" style="left:1276px;top:50px">123</div></div></div><div id="dt"><div id="dtb1"></div><div id="dtb2"></div><svg class="abs" style="left:18px;top:12px" width="30" height="30" viewBox="0 0 30 30"><path d="M2 26 V2 H26" fill="none" stroke="#c7c7c7" stroke-width="3" stroke-dasharray="3 3.5"/><path d="M26 10 V2" fill="none" stroke="#c7c7c7" stroke-width="3" stroke-dasharray="3 3.5"/><path d="M2 26 H10" fill="none" stroke="#c7c7c7" stroke-width="3" stroke-dasharray="3 3.5"/><path d="M13 13 H26 M13 13 V26 M13 13 L27 27" stroke="#c7c7c7" stroke-width="3" fill="none"/></svg><svg class="abs" style="left:72px;top:12px" width="34" height="28" viewBox="0 0 34 28"><path d="M30 2 H6 V25 M1 25 H16" fill="none" stroke="#c7c7c7" stroke-width="3"/><rect x="20.5" y="8.5" width="11" height="17" rx="1.5" fill="none" stroke="#c7c7c7" stroke-width="3"/></svg><div class="sep" style="left:124px;top:10px;height:32px"></div><div class="dtx" style="left:151px;top:16.5px">Elements</div><div class="dtx" style="left:299px;top:16.5px;color:#a8c7fa">Console</div><div class="abs" style="left:278px;top:49px;width:134px;height:5px;background:#a8c7fa;border-radius:3px 3px 0 0"></div><div class="dtx" style="left:432px;top:16.5px">Sources</div><div class="dtx" style="left:568px;top:16.5px">Network</div><svg class="abs" style="left:694px;top:15px" width="26" height="22" viewBox="0 0 26 22"><path d="M2 2 L11 11 L2 20 M14 2 L23 11 L14 20" fill="none" stroke="#a0a0a0" stroke-width="3"/></svg><svg class="abs" style="left:755px;top:14px" width="24" height="24" viewBox="0 0 24 24"><circle cx="12" cy="12" r="11" fill="#e46962"/><path d="M8 8 L16 16 M16 8 L8 16" stroke="#3a1b1b" stroke-width="2"/></svg><div class="dtx" style="left:783px;top:16.5px">1375</div><svg class="abs" style="left:850px;top:15px" width="26" height="23" viewBox="0 0 26 23"><path d="M13 1 L25 22 H1Z" fill="#f28b54"/><path d="M13 8 V15 M13 17.5 V19.5" stroke="#3a2010" stroke-width="2.5"/></svg><div class="dtx" style="left:879px;top:16.5px">14</div><div class="sep" style="left:922px;top:10px;height:32px"></div><svg class="abs" style="left:945px;top:11px" width="30" height="30" viewBox="0 0 30 30"><path d="M10.93 5.86 L11.96 1.85 L18.04 1.85 L19.07 5.86 L20.88 6.91 L24.87 5.79 L27.91 11.05 L24.95 13.95 L24.95 16.05 L27.91 18.95 L24.87 24.21 L20.88 23.09 L19.07 24.14 L18.04 28.15 L11.96 28.15 L10.93 24.14 L9.12 23.09 L5.13 24.21 L2.09 18.95 L5.05 16.05 L5.05 13.95 L2.09 11.05 L5.13 5.79 L9.12 6.91Z" fill="none" stroke="#c7c7c7" stroke-width="2.8" stroke-linejoin="round"/><circle cx="15" cy="15" r="4.6" fill="#c7c7c7"/></svg><svg class="abs" style="left:1011px;top:14px" width="10" height="26" viewBox="0 0 10 26"><circle cx="5" cy="4" r="3.1" fill="#c7c7c7"/><circle cx="5" cy="12.8" r="3.1" fill="#c7c7c7"/><circle cx="5" cy="21.6" r="3.1" fill="#c7c7c7"/></svg><svg class="abs" style="left:1059px;top:15px" width="22" height="22" viewBox="0 0 22 22"><path d="M2 2 L20 20 M20 2 L2 20" stroke="#c7c7c7" stroke-width="3"/></svg><svg class="abs" style="left:18px;top:66px" width="30" height="30" viewBox="0 0 30 30"><rect x="1.5" y="1.5" width="27" height="27" rx="3" fill="none" stroke="#c7c7c7" stroke-width="3"/><path d="M10 2 V28" stroke="#c7c7c7" stroke-width="3"/><path d="M15 8 L22 15 L15 22Z" fill="#c7c7c7"/></svg><svg class="abs" style="left:72px;top:64px" width="32" height="32" viewBox="0 0 32 32"><circle cx="16" cy="16" r="13.5" fill="none" stroke="#c7c7c7" stroke-width="3"/><path d="M7 25 L25 7" stroke="#c7c7c7" stroke-width="3"/></svg><div class="sep" style="left:124px;top:64px;height:32px"></div><div class="dtx" style="left:151px;top:69.5px">top</div><svg class="abs" style="left:197px;top:77px" width="16" height="12" viewBox="0 0 16 12"><path d="M0 0 H16 L8 11Z" fill="#c7c7c7"/></svg><div class="sep" style="left:235px;top:64px;height:32px"></div><svg class="abs" style="left:254px;top:67px" width="38" height="26" viewBox="0 0 38 26"><path d="M2 13 C8 3 30 3 36 13 C30 23 8 23 2 13Z" fill="none" stroke="#c7c7c7" stroke-width="2.6"/><circle cx="19" cy="13" r="5.5" fill="none" stroke="#c7c7c7" stroke-width="2.8"/></svg><div class="sep" style="left:309px;top:64px;height:32px"></div><div class="abs" style="left:325px;top:60px;width:276px;height:40px;border-radius:20px;background:#3b3b3b"></div><svg class="abs" style="left:347px;top:71px" width="20" height="20" viewBox="0 0 20 20"><path d="M1.5 1.5 H18.5 L11 10 V19 H9 V10Z" fill="none" stroke="#c7c7c7" stroke-width="2.6" stroke-linejoin="round"/></svg><div class="dtx" style="left:381px;top:69px">Filter</div><div class="dtx" style="left:624px;top:69.5px">Default levels</div><svg class="abs" style="left:786px;top:77px" width="16" height="12" viewBox="0 0 16 12"><path d="M0 0 H16 L8 11Z" fill="#c7c7c7"/></svg><div class="sep" style="left:824px;top:64px;height:32px"></div><div class="dtx" style="left:837px;top:69.5px">No Issues</div><div class="sep" style="left:960px;top:64px;height:32px"></div><div class="dtx" style="left:982px;top:69.5px;color:#9a9a9a">32 hidden</div><svg class="abs" style="left:15px;top:117px" width="30" height="30" viewBox="0 0 30 30"><path d="M10.93 5.86 L11.96 1.85 L18.04 1.85 L19.07 5.86 L20.88 6.91 L24.87 5.79 L27.91 11.05 L24.95 13.95 L24.95 16.05 L27.91 18.95 L24.87 24.21 L20.88 23.09 L19.07 24.14 L18.04 28.15 L11.96 28.15 L10.93 24.14 L9.12 23.09 L5.13 24.21 L2.09 18.95 L5.05 16.05 L5.05 13.95 L2.09 11.05 L5.13 5.79 L9.12 6.91Z" fill="none" stroke="#c7c7c7" stroke-width="2.8" stroke-linejoin="round"/><circle cx="15" cy="15" r="4.6" fill="#c7c7c7"/></svg><div id="cons"><div class="msg" style="top:-20px;height:1285px;border-radius:0 0 9px 9px"><div style="position:absolute;left:47.5px;top:18.3px"><div class="ln">    at DialogPortal (</div><div class="ln"><span class="lk">http://localhost:3000/node_modules/.vite/deps/chunk-NB2EO6XN.js?v=dc75472a…</span></div><div class="ln">)</div><div class="ln">    at _c3 (<span class="lk">http://localhost:3000/components/ui/dialog.tsx:49:49</span>)</div><div class="ln">    at Provider (</div><div class="ln"><span class="lk">http://localhost:3000/node_modules/.vite/deps/chunk-36WGJFHK.js?v=dc75472a…</span></div><div class="ln">)</div><div class="ln">    at Dialog (</div><div class="ln"><span class="lk">http://localhost:3000/node_modules/.vite/deps/chunk-NB2EO6XN.js?v=dc75472a…</span></div><div class="ln">)</div><div class="ln">    at TrainTimetableModal (</div><div class="ln"><span class="lk">http://localhost:3000/app/game/components/TrainTimetableModal.tsx:35:39</span>)</div><div class="ln">    at KeyboardShortcutsProvider (</div><div class="ln"><span class="lk">http://localhost:3000/app/game/hooks/KeyboardShortcutsContext.tsx:40:45</span>)</div><div class="ln">    at UiProvider (<span class="lk">http://localhost:3000/app/game/uiContext.tsx:248:30</span>)</div><div class="ln">    at LoadingProvider (</div><div class="ln"><span class="lk">http://localhost:3000/app/game/loadingContext.tsx:20:35</span>)</div><div class="ln">    at SettingsProvider (</div><div class="ln"><span class="lk">http://localhost:3000/app/game/settingsContext.tsx:21:36</span>)</div><div class="ln">    at CityProvider (<span class="lk">http://localhost:3000/app/game/cityContext.tsx:21:32</span>)</div><div class="ln">    at GameContent (<span class="lk">http://localhost:3000/app/GameMain.tsx:48:26</span>)</div><div class="ln">    at GameCrashBoundary (</div><div class="ln"><span class="lk">http://localhost:3000/app/game/components/crashBoundary.tsx:9:5</span>)</div><div class="ln">    at GameMain</div><div class="ln">    at Suspense</div><div class="ln">    at GamePage (<span class="lk">http://localhost:3000/src/pages/GamePage.tsx:26:17</span>)</div><div class="ln">    at RenderedRoute (</div><div class="ln"><span class="lk">http://localhost:3000/node_modules/.vite/deps/react-router-dom.js?v=469597…</span></div><div class="ln">)</div><div class="ln">    at Routes (</div><div class="ln"><span class="lk">http://localhost:3000/node_modules/.vite/deps/react-router-dom.js?v=469597…</span></div><div class="ln">)</div><div class="ln">    at ThemeProvider (</div><div class="ln"><span class="lk">http://localhost:3000/components/theme-provider.tsx:21:3</span>)</div><div class="ln">    at div</div><div class="ln">    at SettingsProvider (</div><div class="ln"><span class="lk">http://localhost:3000/app/game/settingsContext.tsx:21:36</span>)</div><div class="ln">    at KeybindingProvider (</div><div class="ln"><span class="lk">http://localhost:3000/lib/keybindings/context.tsx:21:38</span>)</div><div class="ln">    at CrashBoundary (</div><div class="ln"><span class="lk">http://localhost:3000/src/components/CrashBoundary.tsx:8:5</span>)</div><div class="ln">    at App (<span class="lk">http://localhost:3000/src/App.tsx:34:20</span>)</div><div class="ln">    at Router (</div><div class="ln"><span class="lk">http://localhost:3000/node_modules/.vite/deps/react-router-dom.js?v=469597…</span></div><div class="ln">)</div><div class="ln">    at HashRouter (</div><div class="ln"><span class="lk">http://localhost:3000/node_modules/.vite/deps/react-router-dom.js?v=469597…</span></div><div class="ln">)</div></div></div><div class="msg" style="top:1273px;height:1200px;border-radius:9px 9px 0 0"><div style="position:absolute;left:47.5px;top:4.8px"><div class="ln">  Warning: Encountered two children with the same key,</div><div class="ln">`7e9ca2ce-71a9-4720-b6dd-a51dd901a7eb`. Keys should be unique so that</div><div class="ln">components maintain their identity across updates. Non-unique keys may</div><div class="ln">cause children to be duplicated and/or omitted — the behavior is</div><div class="ln">unsupported and could change in a future version.</div><div class="ln">    at tr</div><div class="ln">    at thead</div><div class="ln">    at table</div><div class="ln">    at div</div><div class="ln">    at div</div><div class="ln">    at div</div><div class="ln">    at div</div><div class="ln">    at</div><div class="ln"><span class="lk">http://localhost:3000/node_modules/.vite/deps/chunk-E6QEQLMF.js?v=dc75472a…</span></div><div class="ln">    at</div><div class="ln"><span class="lk">http://localhost:3000/node_modules/.vite/deps/chunk-36TCZZTA.js?v=dc75472a…</span></div><div class="ln">    at</div><div class="ln"><span class="lk">http://localhost:3000/node_modules/.vite/deps/chunk-WXWSVRON.js?v=dc75472a…</span></div><div class="ln">    at</div><div class="ln"><span class="lk">http://localhost:3000/node_modules/.vite/deps/chunk-WXWSVRON.js?v=dc75472a…</span></div><div class="ln">    at</div><div class="ln"><span class="lk">http://localhost:3000/node_modules/.vite/deps/chunk-E6QEQLMF.js?v=dc75472a…</span></div><div class="ln">    at</div><div class="ln"><span class="lk">http://localhost:3000/node_modules/.vite/deps/chunk-VQ6CNUY7.js?v=dc75472a…</span></div><div class="ln">    at</div><div class="ln"><span class="lk">http://localhost:3000/node_modules/.vite/deps/chunk-NB2EO6XN.js?v=dc75472a…</span></div><div class="ln">    at</div><div class="ln"><span class="lk">http://localhost:3000/node_modules/.vite/deps/chunk-NB2EO6XN.js?v=dc75472a…</span></div><div class="ln">    at Presence (</div><div class="ln"><span class="lk">http://localhost:3000/node_modules/.vite/deps/chunk-NB2EO6XN.js?v=dc75472a…</span></div></div><svg class="abs" style="left:17px;top:7px" width="23" height="23" viewBox="0 0 23 23"><circle cx="11.5" cy="11.5" r="11" fill="#dc6a62"/><path d="M7.5 7.5 L15.5 15.5 M15.5 7.5 L7.5 15.5" stroke="#3a1b1b" stroke-width="1.6"/></svg><svg class="abs" style="left:57px;top:10px" width="13" height="15" viewBox="0 0 13 15"><path d="M0 0 L12 7.5 L0 15Z" fill="#b5b5b5"/></svg><div class="ln abs" style="left:823px;top:4.8px"><span class="lk">telemetry.ts:151</span></div></div></div></div></div><script>(function(){var w=window.innerWidth;if(w&&Math.abs(w-3600)>2){document.documentElement.style.zoom=w/3600;}})();</script></body></html>
